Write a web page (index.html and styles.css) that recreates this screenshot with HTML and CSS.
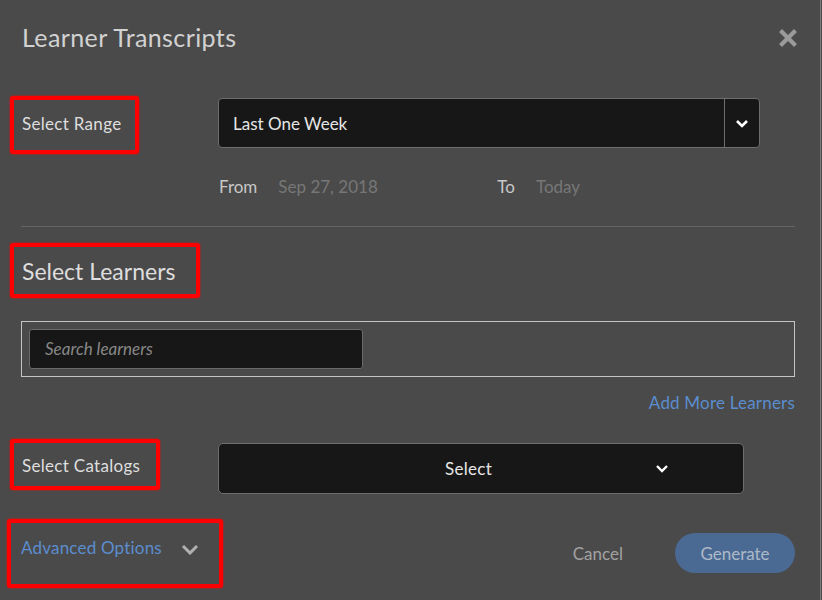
FILE: index.html
```html
<!DOCTYPE html>
<html>
<head>
<meta charset="utf-8">
<link rel="stylesheet" href="styles.css">
</head>
<body>
<div class="modal">
  <div class="header">
    <h1 class="title">Learner Transcripts</h1>
    <svg class="close" width="18" height="18" viewBox="0 0 18 18"><path d="M3 3 L15 15 M15 3 L3 15" stroke="#9a9a9a" stroke-width="4.2" stroke-linecap="square"/></svg>
  </div>

  <div class="row range-row">
    <div class="label-col"><span class="label hl hl-range">Select Range</span></div>
    <div class="select select-range">
      <span class="select-text">Last One Week</span>
      <span class="select-btn"><svg width="14" height="9" viewBox="0 0 14 9"><path d="M2 2 L7 7 L12 2" fill="none" stroke="#fff" stroke-width="2.6"/></svg></span>
    </div>
  </div>

  <div class="dates">
    <span class="date-label">From</span><span class="date-val from-val">Sep 27, 2018</span>
    <span class="date-label">To</span><span class="date-val">Today</span>
  </div>

  <div class="divider"></div>

  <h2 class="section"><span class="hl hl-learners">Select Learners</span></h2>

  <div class="learners-box">
    <div class="search">Search learners</div>
  </div>

  <div class="add-more"><span class="link">Add More Learners</span></div>

  <div class="row catalog-row">
    <div class="label-col catalog-label"><span class="label hl hl-catalog">Select Catalogs</span></div>
    <div class="select select-catalog">
      <span class="catalog-text">Select</span>
      <svg class="catalog-chev" width="14" height="9" viewBox="0 0 14 9"><path d="M2 2 L7 7 L12 2" fill="none" stroke="#fff" stroke-width="2.4"/></svg>
    </div>
  </div>

  <div class="footer">
    <div class="advanced hl hl-adv">
      <span class="link">Advanced Options</span>
      <svg class="adv-chev" width="18" height="11" viewBox="0 0 18 11"><path d="M2 2 L9 9 L16 2" fill="none" stroke="#b0b0b0" stroke-width="3"/></svg>
    </div>
    <div class="actions">
      <span class="cancel">Cancel</span>
      <span class="generate">Generate</span>
    </div>
  </div>
</div>
</body>
</html>
```

FILE: styles.css
```css
html, body {
  margin: 0;
  padding: 0;
  background: #4a4a4a;
}
body {
  font-family: "Lato", "Liberation Sans", sans-serif;
  color: #dcdcdc;
}
.modal {
  width: 821px;
  height: 600px;
  box-sizing: border-box;
  border-right: 1px solid #7a7a7a;
  padding: 22px 25px 0 22px;
  overflow: hidden;
}
.header {
  display: flex;
  justify-content: space-between;
  align-items: center;
  height: 30px;
}
.title {
  margin: 0;
  font-size: 25px;
  letter-spacing: 0.4px;
  font-weight: 400;
  line-height: 30px;
  color: #d2d2d2;
}
.close {
  margin-right: -2px;
  margin-top: 2px;
}
.row {
  display: flex;
  align-items: center;
}
.label-col {
  width: 196px;
  flex: none;
}
.catalog-label {
  padding-bottom: 7px;
}
.label {
  font-size: 17px;
  letter-spacing: 0.3px;
  color: #dedede;
}
.hl {
  position: relative;
}
.hl::before {
  content: "";
  position: absolute;
  border: 4px solid #f00;
  border-radius: 3px;
  box-shadow: 0 0 2px #f00;
}
.hl-range::before { left: -12px; right: -18px; top: -17px; bottom: -20px; }
.hl-learners::before { left: -12px; right: -25px; top: -14px; bottom: -13px; }
.hl-catalog::before { left: -12px; right: -20px; top: -16px; bottom: -14px; }
.hl-adv::before { left: -14px; right: -24px; top: -18px; bottom: -30px; }

.range-row {
  margin-top: 46px;
}
.select {
  background: #171717;
  border: 1px solid #6e6e6e;
  box-sizing: border-box;
  color: #e6e6e6;
  font-size: 17px;
}
.select-range {
  width: 542px;
  height: 50px;
  border-radius: 4px;
  display: flex;
  align-items: center;
}
.select-text {
  flex: 1;
  padding-left: 14px;
}
.select-btn {
  width: 34px;
  height: 100%;
  border-left: 1px solid #6e6e6e;
  display: flex;
  align-items: center;
  justify-content: center;
}
.dates {
  margin-top: 28px;
  margin-left: 197px;
  height: 22px;
  line-height: 22px;
  font-size: 17px;
  display: flex;
}
.date-label {
  color: #c8c8c8;
  margin-right: 21px;
}
.date-val {
  color: #777;
}
.from-val {
  width: 219px;
}
.divider {
  margin-top: 28px;
  height: 1px;
  background: #646464;
  margin-left: -1px;
}
.section {
  margin: 30px 0 0 0;
  font-size: 23px;
  font-weight: 400;
  line-height: 28px;
  color: #dedede;
}
.learners-box {
  margin-top: 36px;
  margin-left: -1px;
  height: 56px;
  box-sizing: border-box;
  border: 1px solid #c4c4c4;
  padding: 7px;
}
.search {
  width: 334px;
  height: 40px;
  box-sizing: border-box;
  background: #171717;
  border: 1px solid #6a6a6a;
  border-radius: 3px;
  font-style: italic;
  font-size: 17px;
  color: #888;
  line-height: 38px;
  padding-left: 15px;
}
.add-more {
  margin-top: 15px;
  text-align: right;
  line-height: 22px;
  height: 22px;
}
.link {
  color: #5b8dcf;
  font-size: 17px;
  letter-spacing: 0.2px;
}
.catalog-row {
  margin-top: 29px;
}
.select-catalog {
  width: 526px;
  height: 51px;
  border-radius: 5px;
  display: flex;
  align-items: center;
}
.catalog-text {
  margin-left: 226px;
  flex: 1;
  letter-spacing: 0.3px;
}
.catalog-chev {
  margin-right: 74px;
}
.footer {
  margin-top: 39px;
  display: flex;
  justify-content: space-between;
  align-items: center;
  height: 40px;
}
.advanced {
  display: flex;
  align-items: center;
  margin-left: -1px;
  margin-top: -12px;
}
.adv-chev {
  margin-left: 19px;
  margin-top: 4px;
}
.actions {
  display: flex;
  align-items: center;
}
.cancel {
  color: #a2a2a2;
  font-size: 17px;
  margin-right: 52px;
}
.generate {
  width: 120px;
  height: 40px;
  border-radius: 20px;
  background: #4a6a94;
  color: #aeb9c8;
  font-size: 17px;
  display: flex;
  align-items: center;
  justify-content: center;
}
```
